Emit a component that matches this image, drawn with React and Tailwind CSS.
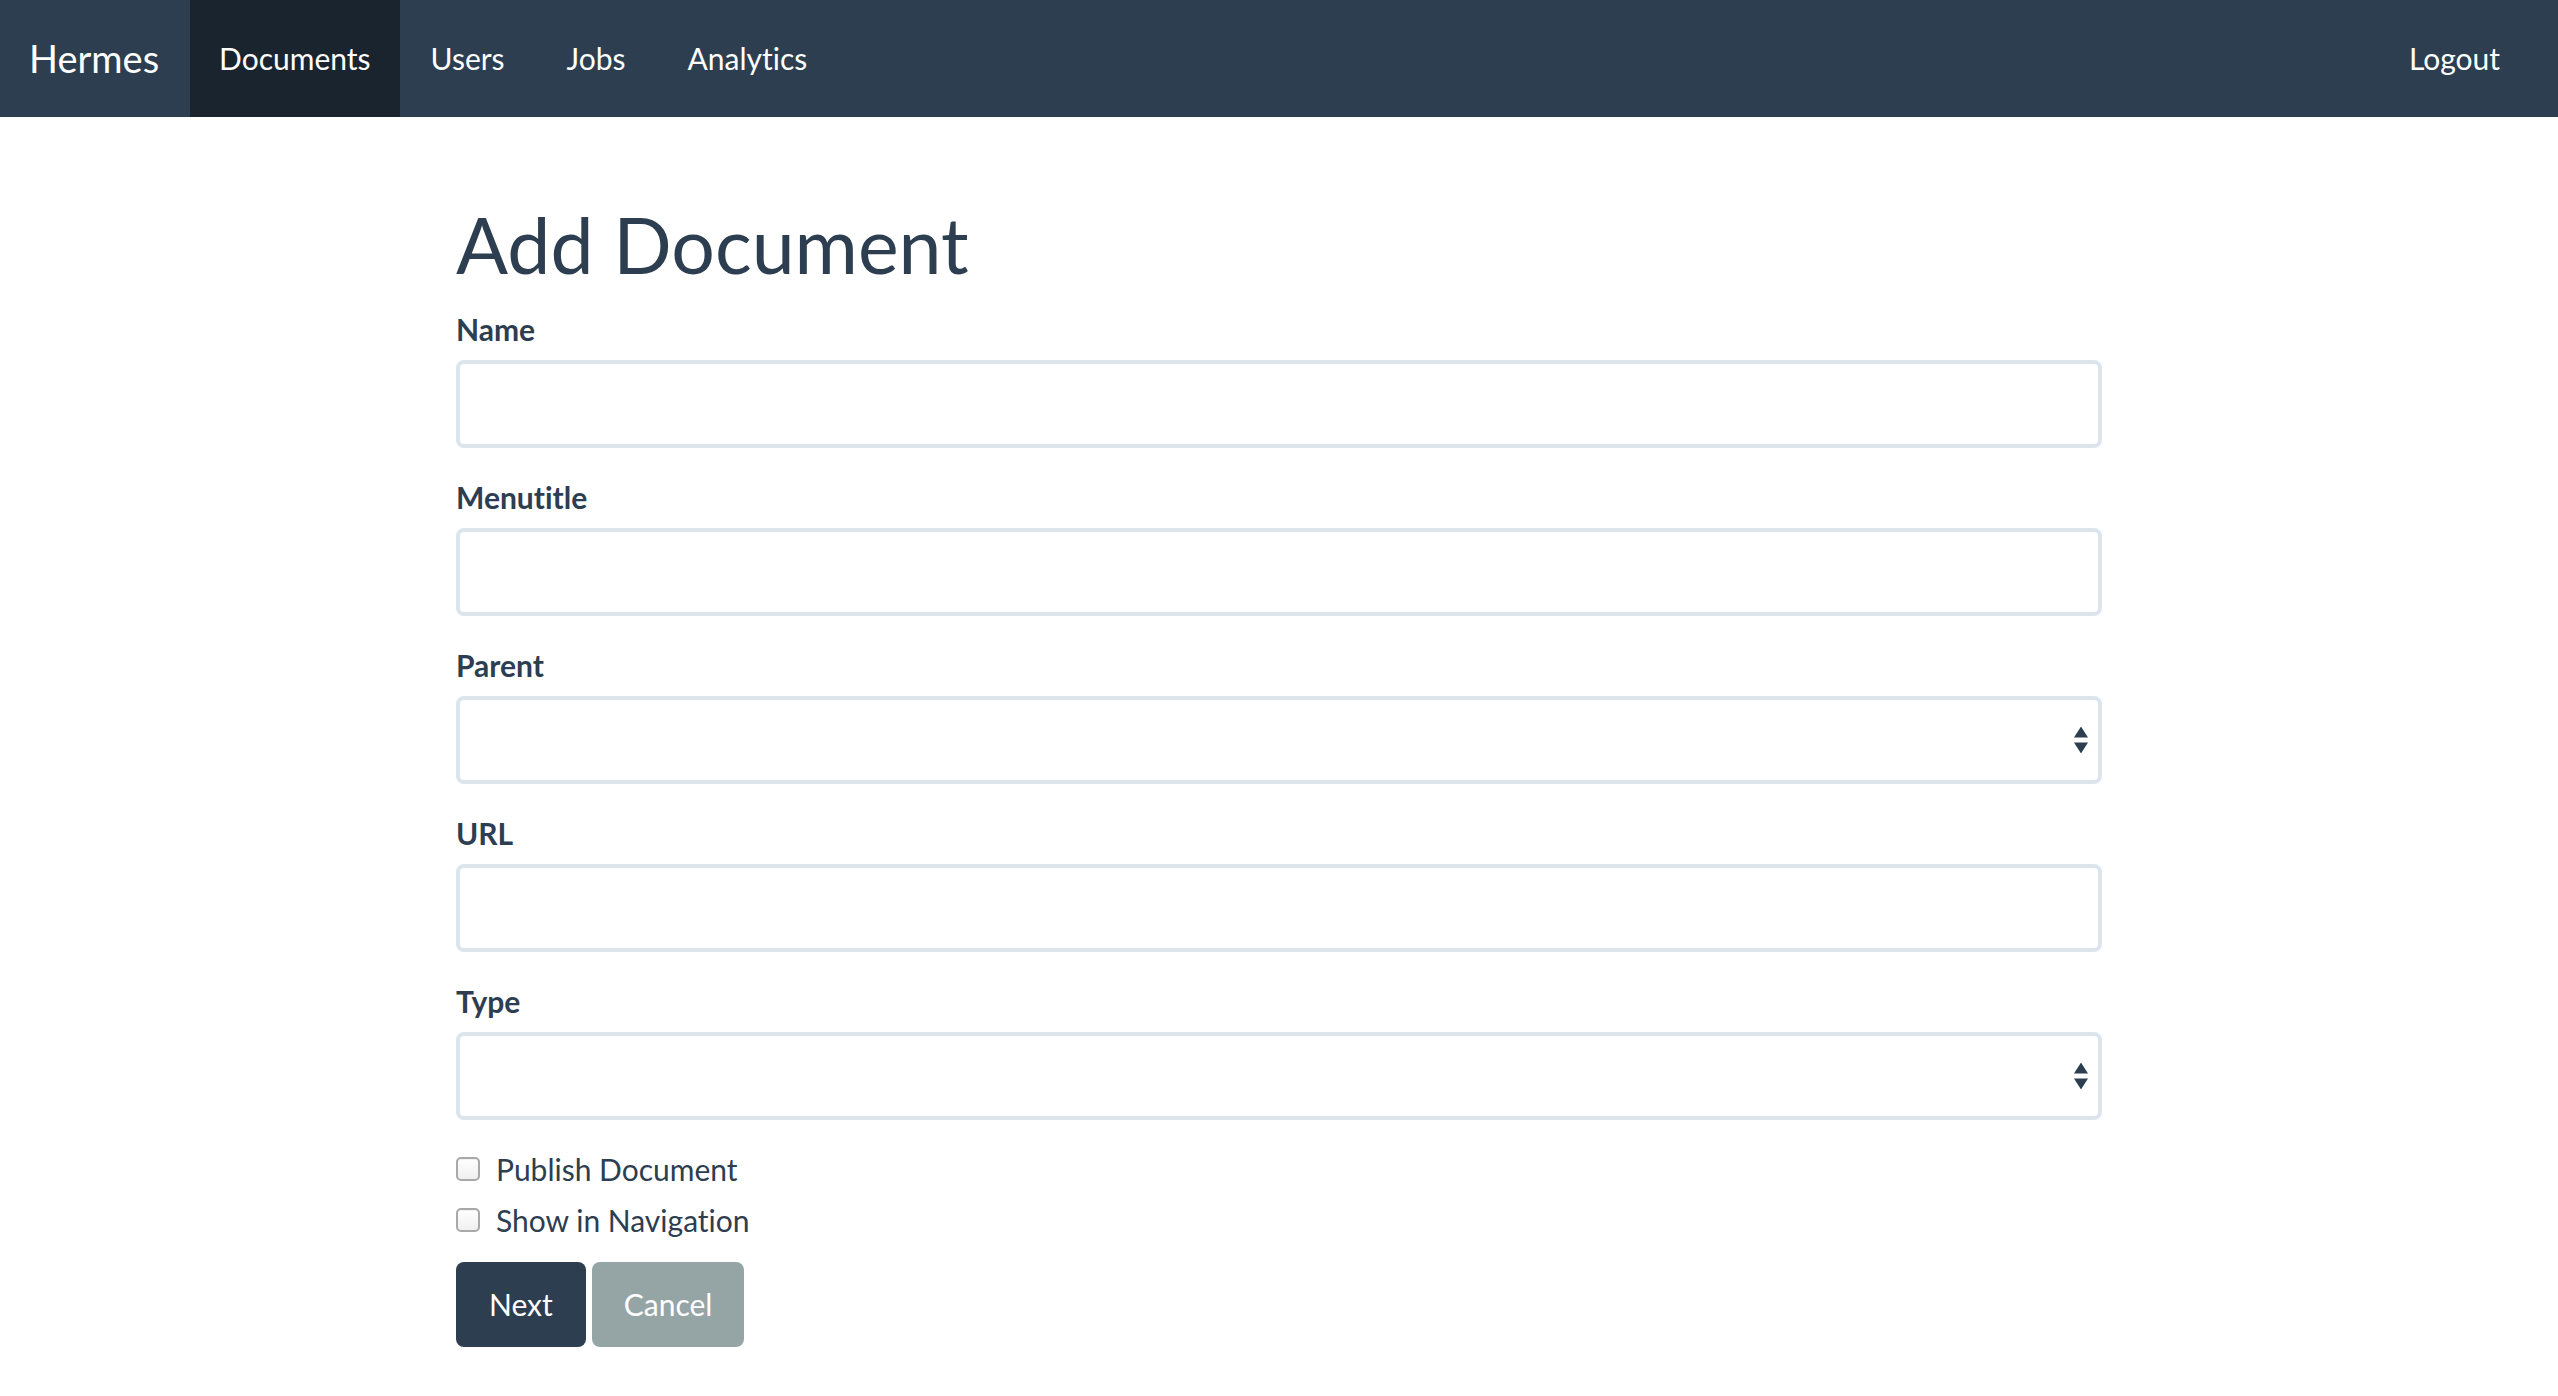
const navLinks = [
  { label: "Documents", active: true },
  { label: "Users" },
  { label: "Jobs" },
  { label: "Analytics" },
];

const fields = [
  { label: "Name", type: "text" },
  { label: "Menutitle", type: "text" },
  { label: "Parent", type: "select" },
  { label: "URL", type: "text" },
  { label: "Type", type: "select" },
];

function SelectArrows() {
  return (
    <svg className="absolute right-[14px] top-1/2 -translate-y-1/2" width="14" height="27" viewBox="0 0 14 27">
      <path d="M7 0 L14 11 L0 11 Z" fill="#2c3e50" />
      <path d="M0 16 L14 16 L7 27 Z" fill="#2c3e50" />
    </svg>
  );
}

function Field({ label, type }) {
  return (
    <div className="mb-[29px]">
      <label className="block font-bold leading-[41px] mb-[10px]">{label}</label>
      <div className="relative">
        {type === "select" ? (
          <>
            <select className="w-full h-[88px] appearance-none rounded-[8px] border-[4px] border-[#dce4ec] bg-white px-[29px] outline-none" />
            <SelectArrows />
          </>
        ) : (
          <input type="text" className="w-full h-[88px] rounded-[8px] border-[4px] border-[#dce4ec] bg-white px-[29px] outline-none" />
        )}
      </div>
    </div>
  );
}

function Check({ label }) {
  return (
    <label className="relative flex items-start leading-[41px] pl-[40px]">
      <span className="absolute left-0 top-[8px] w-[24px] h-[24px] rounded-[5px] border-2 border-[#a9a9a9] bg-gradient-to-b from-white to-[#f0f0f0] shadow-[inset_0_1px_1px_rgba(0,0,0,0.06)]" />
      {label}
    </label>
  );
}

export default function App() {
  return (
    <div className="min-h-screen bg-white text-[#2c3e50] text-[30px] leading-[41px] font-['Lato','Open_Sans',sans-serif] [font-variant-ligatures:none]">
      {/* Navbar */}
      <nav className="h-[117px] bg-[#2c3e50] flex items-stretch justify-between text-white">
        <div className="flex items-stretch">
          <div className="flex items-center pl-[29px] pr-[31px] text-[38px]">Hermes</div>
          {navLinks.map((l) => (
            <div
              key={l.label}
              className={"flex items-center " + (l.active ? "px-[29px] bg-[#1a242f]" : "px-[31px]")}
            >
              {l.label}
            </div>
          ))}
        </div>
        <div className="flex items-center px-[29px] mr-[29px]">Logout</div>
      </nav>

      {/* Form */}
      <div className="w-[1646px] mx-auto pt-[47px]">
        <h1 className="text-[77px] leading-[84px] mt-[38px] mb-[23px]">Add Document</h1>
        {fields.map((f) => (
          <Field key={f.label} {...f} />
        ))}
        <div className="flex flex-col gap-[10px]">
          <Check label="Publish Document" />
          <Check label="Show in Navigation" />
        </div>
        <div className="flex gap-[6px] mt-[21px]">
          <button className="h-[85px] px-[33px] rounded-[8px] bg-[#2c3e50] text-white">Next</button>
          <button className="h-[85px] px-[32px] rounded-[8px] bg-[#95a5a6] text-white">Cancel</button>
        </div>
      </div>
    </div>
  );
}
